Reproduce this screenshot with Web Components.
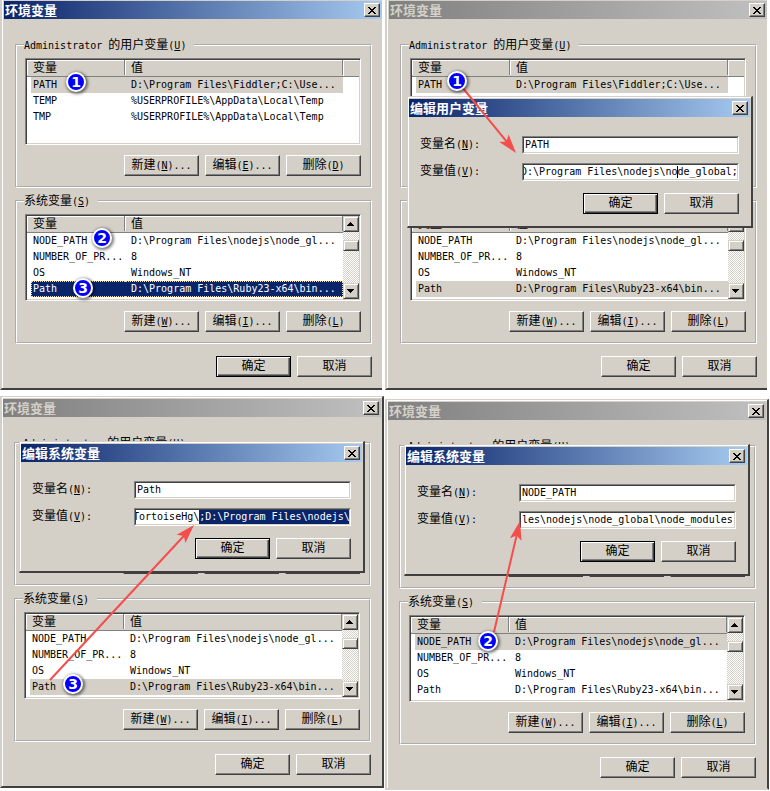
<!DOCTYPE html>
<html lang="zh-CN">
<head>
<meta charset="utf-8">
<title>环境变量</title>
<style>
  body {
    margin: 0;
    background: #fff;
    color: #000;
    --face: #d4d0c8;
    font: 10px/16px "DejaVu Sans Mono", "Noto Sans CJK SC", monospace;
  }
</style>
</head>
<body>
<env-page></env-page>
<script>
const BASE = `
  * { box-sizing: border-box; }
  .c { font-family: "Noto Sans CJK SC", sans-serif; font-size: 12px; line-height: 14px; }
  u { text-underline-offset: 1px; }
`;

/* Chinese runs get the 12px face; "&X" marks an underlined access key. */
const mix = s => s
  .replace(/[\u4e00-\u9fff]+/g, m => `<span class="c">${m}</span>`)
  .replace(/&([A-Z])/g, '<u>$1</u>');

class Part extends HTMLElement {
  connectedCallback() {
    if (this.shadowRoot) return;
    this.attachShadow({ mode: 'open' }).innerHTML = `<style>${BASE}${this.css()}</style>${this.html()}`;
    this.ready();
  }
  css() { return ''; }
  html() { return '<slot></slot>'; }
  ready() {}
  get(name) { return this.getAttribute(name) || ''; }
}

customElements.define('push-button', class extends Part {
  css() { return `
    :host { display: block; width: 75px; }
    button {
      display: block; width: 100%; height: 21px; padding: 0 0 1px; margin: 0;
      border: 1px solid; border-color: #fff #404040 #404040 #fff; border-radius: 0;
      box-shadow: inset -1px -1px #808080;
      background: var(--face); color: inherit; font: inherit; white-space: nowrap;
    }
    :host([default]) button { border-color: #000; box-shadow: inset 1px 1px #fff, inset -1px -1px #404040, inset -2px -2px #808080; }
  `; }
  html() { return `<button type="button">${mix(this.get('label'))}</button>`; }
});

customElements.define('title-bar', class extends Part {
  css() { return `
    :host {
      display: flex; align-items: center; justify-content: space-between; height: 18px;
      padding: 0 2px 0 1px; color: var(--face);
      background: linear-gradient(90deg, #808080, #c0c0c0);
    }
    :host([active]) { color: #fff; background: linear-gradient(90deg, #0a246a, #a6caf0); }
    h2 { margin: 0; font: bold 13px/18px "Noto Sans CJK SC", sans-serif; }
    button {
      display: grid; place-items: center; width: 16px; height: 14px; padding: 0; margin: 0;
      background: var(--face); border: 1px solid; border-color: #fff #404040 #404040 #fff; border-radius: 0;
      box-shadow: inset -1px -1px #808080;
    }
    svg { display: block; }
  `; }
  html() { return `
    <h2>${this.get('label')}</h2>
    <button type="button" aria-label="关闭">
      <svg width="10" height="9" viewBox="0 0 10 9" shape-rendering="crispEdges">
        <path d="M1 1h2v1h1v1h2V2h1V1h2v1H8v1H7v1H6v1h1v1h1v1h1v1H7V7H6V6H4v1H3v1H1V7h1V6h1V5h1V4H3V3H2V2H1z"/>
      </svg>
    </button>`; }
});

customElements.define('list-scroll', class extends Part {
  css() { return `
    :host { display: flex; flex-direction: column; width: 16px;
      background: repeating-conic-gradient(#fff 0 25%, #d4d0c8 0 50%) 0 0 / 2px 2px; }
    button, i {
      display: grid; place-items: center; height: 16px; width: 16px; padding: 0; margin: 0;
      background: var(--face); border: 1px solid; border-color: #d4d0c8 #404040 #404040 #d4d0c8; border-radius: 0;
      box-shadow: inset 1px 1px #fff, inset -1px -1px #808080;
    }
    i { height: 11px; margin: 8px 0 auto; }
  `; }
  html() {
    const b = (name, d) => `<button type="button" aria-label="${name}"><svg width="8" height="4" viewBox="0 0 8 4" shape-rendering="crispEdges"><path d="${d}"/></svg></button>`;
    return b('向上滚动', 'M3 0h1v1h1v1h1v1h1v1H0V3h1V2h1V1h1z') + '<i></i>' + b('向下滚动', 'M0 0h7v1H6v1H5v1H4v1H3V3H2V2H1V1H0z');
  }
});

customElements.define('variable-list', class extends Part {
  css() { return `
    :host {
      display: flex; height: 87px; overflow: hidden; background: #fff;
      border: 1px solid; border-color: #808080 #fff #fff #808080;
      box-shadow: inset 1px 1px #404040, inset -1px -1px var(--face);
      padding: 1px;
    }
    :host([covered]) table { visibility: hidden; }
    table { flex: 1; border-collapse: collapse; table-layout: fixed; width: 100%; height: max-content; }
    th, td { padding: 0; height: 16px; text-align: left; font-weight: normal; white-space: nowrap; }
    th, .end { background: var(--face); border-bottom: 1px solid #808080; line-height: 15px; }
    th div { height: 15px; line-height: 17px; padding-left: 6px; border-right: 1px solid #808080; box-shadow: inset 1px 1px #fff; }
    .end { box-shadow: inset 1px 1px #fff; }
    td div { height: 16px; padding-left: 6px; border: 0 solid transparent; }
    .key { padding-left: 4px; }
    .key div { padding-left: 2px; }
    .inactive div { background: var(--face); }
    .active div { background: #0a246a; color: #fff; line-height: 14px; border: 1px dotted #f5db95; border-width: 1px 0; }
    .active .key div { border-left-width: 1px; padding-left: 1px; }
    .active .value div { border-right-width: 1px; }
  `; }
  html() {
    const system = this.get('kind') === 'system';
    const rows = system
      ? [['NODE_PATH', 'D:\\Program Files\\nodejs\\node_gl...'], ['NUMBER_OF_PR...', '8'], ['OS', 'Windows_NT'], ['Path', 'D:\\Program Files\\Ruby23-x64\\bin...']]
      : [['PATH', 'D:\\Program Files\\Fiddler;C:\\Use...'], ['TEMP', '%USERPROFILE%\\AppData\\Local\\Temp'], ['TMP', '%USERPROFILE%\\AppData\\Local\\Temp']];
    const state = this.hasAttribute('focused') ? 'active' : 'inactive';
    const body = rows.map(([k, v]) => `<tr class="${k === this.get('selected') ? state : ''}"><td class="key"><div>${k}</div></td><td class="value"><div>${v}</div></td>${system ? '' : '<td></td>'}</tr>`).join('');
    return `<table>
      <colgroup><col style="width:98px"><col>${system ? '' : '<col style="width:16px">'}</colgroup>
      <thead><tr><th scope="col"><div>${mix('变量')}</div></th><th scope="col"><div>${mix('值')}</div></th>${system ? '' : '<td class="end"></td>'}</tr></thead>
      <tbody>${body}</tbody></table>${system ? '<list-scroll></list-scroll>' : ''}`;
  }
});

customElements.define('variable-group', class extends Part {
  css() { return `
    :host { display: block; }
    fieldset { margin: 0; min-width: 0; padding: 5px 9px 10px 8px; border: 2px groove #fff; }
    legend { height: 16px; margin-left: -1px; padding: 0 8px 0 0; white-space: nowrap; }
    .row { display: flex; justify-content: flex-end; gap: 6px; margin-top: 10px; }
  `; }
  html() { return `<fieldset><legend>${mix(this.get('label'))}</legend><slot></slot>
    <div class="row">${this.get('actions').split('|').map(a => `<push-button label="${a}"></push-button>`).join('')}</div></fieldset>`; }
});

customElements.define('env-window', class extends Part {
  css() { return `
    :host { display: block; position: relative; background: var(--face);
      border: 0 solid var(--face); border-left-width: 2px; box-shadow: inset 1px 0 #fff; }
    :host([frame="top"]) { margin-right: 3px; padding: 1px 0 11px 2px; border-bottom: 2px solid #404040; }
    :host([frame="bottom"]) { margin-right: 1px; padding: 2px 1px 11px 1px; border-top-width: 1px; border-right: 2px solid #404040; border-bottom: 2px solid #404040; box-shadow: inset 1px 1px #fff; }
    :host([cut]) { margin-top: 3px; border-bottom-color: var(--face); padding-bottom: 10px; }
    main { padding: 18px 10px 0 11px; }
    .second { margin-top: 5px; }
    .row { display: flex; justify-content: flex-end; gap: 6px; margin-top: 12px; }
  `; }
  html() {
    const active = this.hasAttribute('active');
    return `<title-bar label="环境变量" ${active ? 'active' : ''}></title-bar>
    <main>
      <variable-group label="Administrator 的用户变量(&U)" actions="新建(&N)...|编辑(&E)...|删除(&D)"><variable-list kind="user" selected="PATH" ${this.get('frame') === 'bottom' ? 'covered' : ''}></variable-list></variable-group>
      <variable-group class="second" label="系统变量(&S)" actions="新建(&W)...|编辑(&I)...|删除(&L)"><variable-list kind="system" selected="${this.get('selected')}" ${active ? 'focused' : ''}></variable-list></variable-group>
      <div class="row"><push-button label="确定" ${active ? 'default' : ''}></push-button><push-button label="取消"></push-button></div>
    </main><slot></slot>`;
  }
});

customElements.define('edit-dialog', class extends Part {
  css() { return `
    :host { display: block; position: absolute; left: var(--x); top: var(--y); width: 346px; background: var(--face);
      padding: 2px 1px 12px 1px; border: 1px solid; border-color: var(--face) #404040 #404040 var(--face);
      border-right-width: 2px; border-bottom-width: 2px; box-shadow: inset 1px 1px #fff; box-sizing: border-box; }
    form { margin: 19px 11px 0; display: grid; grid-template-columns: 102px 1fr; row-gap: 9px; }
    label { height: 18px; line-height: 18px; white-space: nowrap; }
    .field { height: 18px; border: 1px solid; border-color: #808080 #fff #fff #808080; }
    textarea {
      display: block; width: 100%; height: 16px; margin: 0; padding: 0 0 0 1px; resize: none; overflow: hidden; white-space: pre;
      font: inherit; line-height: 14px; color: #000; background: #fff;
      border: 1px solid; border-color: #404040 var(--face) var(--face) #404040; border-radius: 0;
      outline: none; caret-color: transparent;
    }
    textarea::selection { background: #0a246a; color: #fff; }
    :host([clipped]) #v { text-indent: -4px; }
    :host([caret]) #v { background: linear-gradient(#000, #000) 153px 1px / 1px 12px no-repeat #fff; }
    .row { grid-column: 1 / -1; display: flex; justify-content: flex-end; gap: 6px; margin-top: 3px; }
  `; }
  html() { return `<title-bar active label="${this.get('label')}"></title-bar>
    <form>
      <label for="n">${mix('变量名(&N):')}</label><div class="field"><textarea id="n" rows="1" wrap="off" spellcheck="false">${this.get('name')}</textarea></div>
      <label for="v">${mix('变量值(&V):')}</label><div class="field"><textarea id="v" rows="1" wrap="off" spellcheck="false">${this.get('value')}</textarea></div>
      <div class="row"><push-button default label="确定"></push-button><push-button label="取消"></push-button></div>
    </form>`; }
  ready() {
    if (!this.hasAttribute('select-from')) return;
    const v = this.shadowRoot.getElementById('v');
    v.focus({ preventScroll: true });
    v.setSelectionRange(+this.get('select-from'), v.value.length, 'backward');
  }
});

customElements.define('step-badge', class extends Part {
  css() { return `
    :host { position: absolute; left: var(--x); top: var(--y); width: 20px; height: 20px;
      border: 2px solid #fff; border-radius: 50%; background: #00f; color: #fff; text-align: center;
      font: bold 14px/16px "DejaVu Sans", sans-serif; box-shadow: 1px 1px 3px 1px rgba(0,0,0,.5); box-sizing: border-box; }
  `; }
});

customElements.define('step-arrow', class extends Part {
  css() { return `
    :host { position: absolute; inset: 0; pointer-events: none; }
    svg { display: block; width: 100%; height: 100%; overflow: visible; }
  `; }
  html() {
    const [x1, y1, x2, y2] = this.get('path').split(' ').map(Number);
    const len = Math.hypot(x2 - x1, y2 - y1);
    const deg = Math.atan2(y2 - y1, x2 - x1) * 180 / Math.PI;
    return `<svg aria-hidden="true"><g transform="translate(${x1} ${y1}) rotate(${deg})" fill="#f54c4c" stroke="none">
      <path d="M0 -1H${len - 14}V1H0z"/><path d="M${len} 0L${len - 19} -6L${len - 15} 0L${len - 19} 6z"/></g></svg>`;
  }
});

customElements.define('env-page', class extends Part {
  css() { return `
    :host { display: grid; grid-template-columns: 1fr 1fr; row-gap: 6px; align-items: start; }
  `; }
  html() { return `
    <env-window frame="top" active selected="Path">
      <step-badge style="--x:64px;--y:72px">1</step-badge>
      <step-badge style="--x:90px;--y:228px">2</step-badge>
      <step-badge style="--x:71px;--y:278px">3</step-badge>
    </env-window>
    <env-window frame="top" selected="Path">
      <edit-dialog style="--x:20px;--y:96px" label="编辑用户变量" name="PATH" value="D:\\Program Files\\nodejs\\node_global;" clipped caret></edit-dialog>
      <step-arrow path="75 87 129 153"></step-arrow>
      <step-badge style="--x:60px;--y:71px">1</step-badge>
    </env-window>
    <env-window frame="bottom" selected="Path">
      <edit-dialog style="--x:17px;--y:44px" label="编辑系统变量" name="Path" value="TortoiseHg\\;D:\\Program Files\\nodejs\\" clipped select-from="11"></edit-dialog>
      <step-arrow path="48 283 192 128"></step-arrow>
      <step-badge style="--x:61px;--y:277px">3</step-badge>
    </env-window>
    <env-window frame="bottom" cut selected="NODE_PATH">
      <edit-dialog style="--x:17px;--y:44px" label="编辑系统变量" name="NODE_PATH" value="les\\nodejs\\node_global\\node_modules"></edit-dialog>
      <step-arrow path="107 232 133 121"></step-arrow>
      <step-badge style="--x:91px;--y:231px">2</step-badge>
    </env-window>`; }
});
</script>
</body>
</html>
